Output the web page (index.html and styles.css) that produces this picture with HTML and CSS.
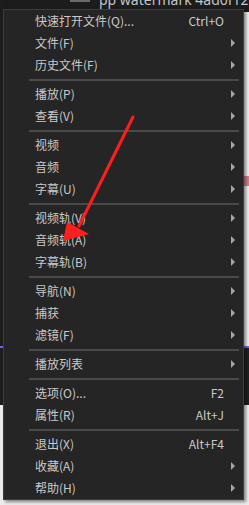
FILE: index.html
```html
<!DOCTYPE html>
<html lang="zh">
<head>
<meta charset="utf-8">
<link rel="stylesheet" href="styles.css">
</head>
<body>
<div class="titlebar"><span class="title">pp watermark 4ad0f120</span></div>
<div class="menu">
  <div class="item"><span class="label">快速打开文件(Q)...</span><span class="key">Ctrl+O</span><span class="sub"></span></div>
  <div class="item"><span class="label">文件(F)</span><span class="sub"><i class="tri"></i></span></div>
  <div class="item"><span class="label">历史文件(F)</span><span class="sub"><i class="tri"></i></span></div>
  <div class="sep"></div>
  <div class="item"><span class="label">播放(P)</span><span class="sub"><i class="tri"></i></span></div>
  <div class="item"><span class="label">查看(V)</span><span class="sub"><i class="tri"></i></span></div>
  <div class="sep"></div>
  <div class="item"><span class="label">视频</span><span class="sub"><i class="tri"></i></span></div>
  <div class="item"><span class="label">音频</span><span class="sub"><i class="tri"></i></span></div>
  <div class="item"><span class="label">字幕(U)</span><span class="sub"><i class="tri"></i></span></div>
  <div class="sep"></div>
  <div class="item"><span class="label">视频轨(V)</span><span class="sub"><i class="tri"></i></span></div>
  <div class="item"><span class="label">音频轨(A)</span><span class="sub"><i class="tri"></i></span></div>
  <div class="item"><span class="label">字幕轨(B)</span><span class="sub"><i class="tri"></i></span></div>
  <div class="sep"></div>
  <div class="item"><span class="label">导航(N)</span><span class="sub"><i class="tri"></i></span></div>
  <div class="item"><span class="label">捕获</span><span class="sub"><i class="tri"></i></span></div>
  <div class="item"><span class="label">滤镜(F)</span><span class="sub"><i class="tri"></i></span></div>
  <div class="sep"></div>
  <div class="item"><span class="label">播放列表</span><span class="sub"><i class="tri"></i></span></div>
  <div class="sep"></div>
  <div class="item"><span class="label">选项(O)...</span><span class="key">F2</span><span class="sub"></span></div>
  <div class="item"><span class="label">属性(R)</span><span class="key">Alt+J</span><span class="sub"></span></div>
  <div class="sep"></div>
  <div class="item"><span class="label">退出(X)</span><span class="key">Alt+F4</span><span class="sub"></span></div>
  <div class="item"><span class="label">收藏(A)</span><span class="sub"><i class="tri"></i></span></div>
  <div class="item"><span class="label">帮助(H)</span><span class="sub"><i class="tri"></i></span></div>
</div>
<svg class="annot" width="249" height="505" viewBox="0 0 249 505">
  <line x1="133" y1="117" x2="79" y2="226" stroke="#ff1e1e" stroke-width="3" stroke-linecap="round"/>
  <polygon points="63,241 67,222 89,234" fill="#ff1e1e"/>
</svg>
</body>
</html>
```
FILE: styles.css
```css
html, body {
  margin: 0;
  padding: 0;
}
body {
  width: 249px;
  height: 505px;
  overflow: hidden;
  position: relative;
  font-family: "Noto Sans CJK SC", "Noto Sans", sans-serif;
  background:
    linear-gradient(#7b5cf2, #7b5cf2) 243px 346px / 6px 2px no-repeat,
    linear-gradient(#7b5cf2, #7b5cf2) 0 346px / 3px 2px no-repeat,
    linear-gradient(#d97a8a, #d97a8a) 244px 176px / 5px 10px no-repeat,
    linear-gradient(#1f1f1f, #1f1f1f) 243px 348px / 6px 57px no-repeat,
    linear-gradient(#1d1d1d, #1d1d1d) 0 0 / 3px 405px no-repeat,
    linear-gradient(#6a6a6a, #6a6a6a) 70px 0 / 20px 2px no-repeat,
    linear-gradient(#1c1c1c, #1c1c1c) 0 0 / 249px 12px no-repeat,
    #ececec;
}
.titlebar {
  height: 9px;
  overflow: hidden;
  padding-left: 99px;
}
.title {
  display: block;
  margin-top: -7px;
  font-family: "Noto Sans", sans-serif;
  font-size: 14px;
  line-height: 14px;
  color: #c4c4c4;
  white-space: nowrap;
}
.menu {
  margin-left: 3px;
  width: 239px;
  background: #252525;
  border: 1px solid #3d3d3d;
  box-shadow: 2px 2px 3px rgba(0, 0, 0, 0.45);
  font-size: 12px;
  color: #c9c9c9;
}
.item {
  display: flex;
  align-items: center;
  height: 22px;
  line-height: 22px;
  padding-left: 31px;
  white-space: nowrap;
}
.label {
  flex: 1;
}
.key {
  color: #c9c9c9;
}
.sub {
  width: 19px;
  height: 22px;
  display: flex;
  align-items: center;
  padding-left: 7px;
  box-sizing: border-box;
}
.tri {
  display: block;
  width: 0;
  height: 0;
  border-left: 4px solid #a6a6a6;
  border-top: 4px solid transparent;
  border-bottom: 4px solid transparent;
}
.sep {
  height: 2px;
  margin: 3px 4px 2px 25px;
  background: #4a4a4a;
}
.annot {
  position: absolute;
  left: 0;
  top: 0;
  pointer-events: none;
}
```
